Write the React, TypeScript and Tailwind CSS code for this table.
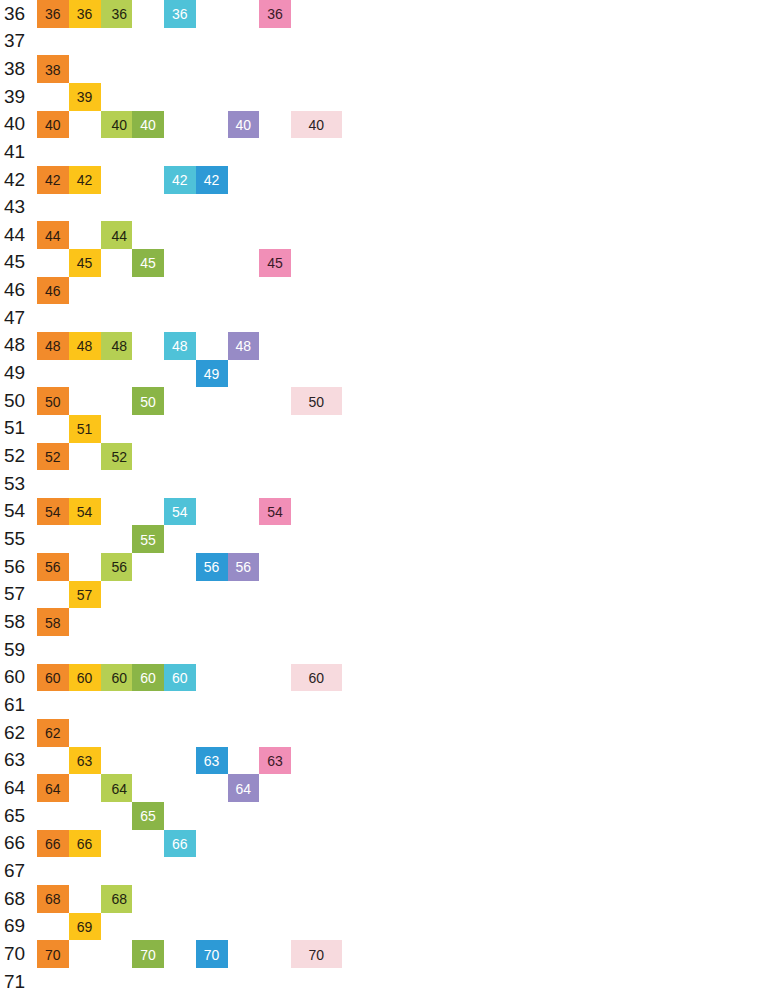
import React from "react";

type Col = { d: number; bg: string; text: string; w: string };

const cols: Col[] = [
  { d: 2, bg: "bg-[#f28b2b]", text: "text-[#2a1a10]", w: "w-[31.75px]" },
  { d: 3, bg: "bg-[#fcc419]", text: "text-[#2a2210]", w: "w-[31.75px]" },
  { d: 4, bg: "bg-[#b5cf53] pl-[6px]", text: "text-[#1f2410]", w: "w-[31.75px]" },
  { d: 5, bg: "bg-[#8ab547]", text: "text-white", w: "w-[31.75px]" },
  { d: 6, bg: "bg-[#4fc2d8]", text: "text-white", w: "w-[31.75px]" },
  { d: 7, bg: "bg-[#2d9ad6]", text: "text-white", w: "w-[31.75px]" },
  { d: 8, bg: "bg-[#978bc6]", text: "text-white", w: "w-[31.75px]" },
  { d: 9, bg: "bg-[#f18fb7]", text: "text-[#3a1a28]", w: "w-[31.75px]" },
  { d: 10, bg: "bg-[#f7dade]", text: "text-[#2a2224]", w: "w-[50.5px]" },
];

const rows = Array.from({ length: 36 }, (_, i) => 36 + i);

export default function App() {
  return (
    <div className="min-h-screen bg-white font-['Liberation_Sans',Arial,sans-serif] overflow-hidden">
      <div className="flex flex-col">
        {rows.map((n) => (
          <div key={n} className="flex h-[27.67px] items-stretch">
            <div className="w-[37px] shrink-0 pl-[4px] flex items-center text-[19px] text-[#1a1a1a]">
              {n}
            </div>
            {cols.map((c) =>
              n % c.d === 0 ? (
                <div
                  key={c.d}
                  className={`${c.w} ${c.bg} ${c.text} shrink-0 flex items-center justify-center text-[14px] pt-[2px]`}
                >
                  {n}
                </div>
              ) : (
                <div key={c.d} className={`${c.w} shrink-0`} />
              )
            )}
          </div>
        ))}
      </div>
    </div>
  );
}
